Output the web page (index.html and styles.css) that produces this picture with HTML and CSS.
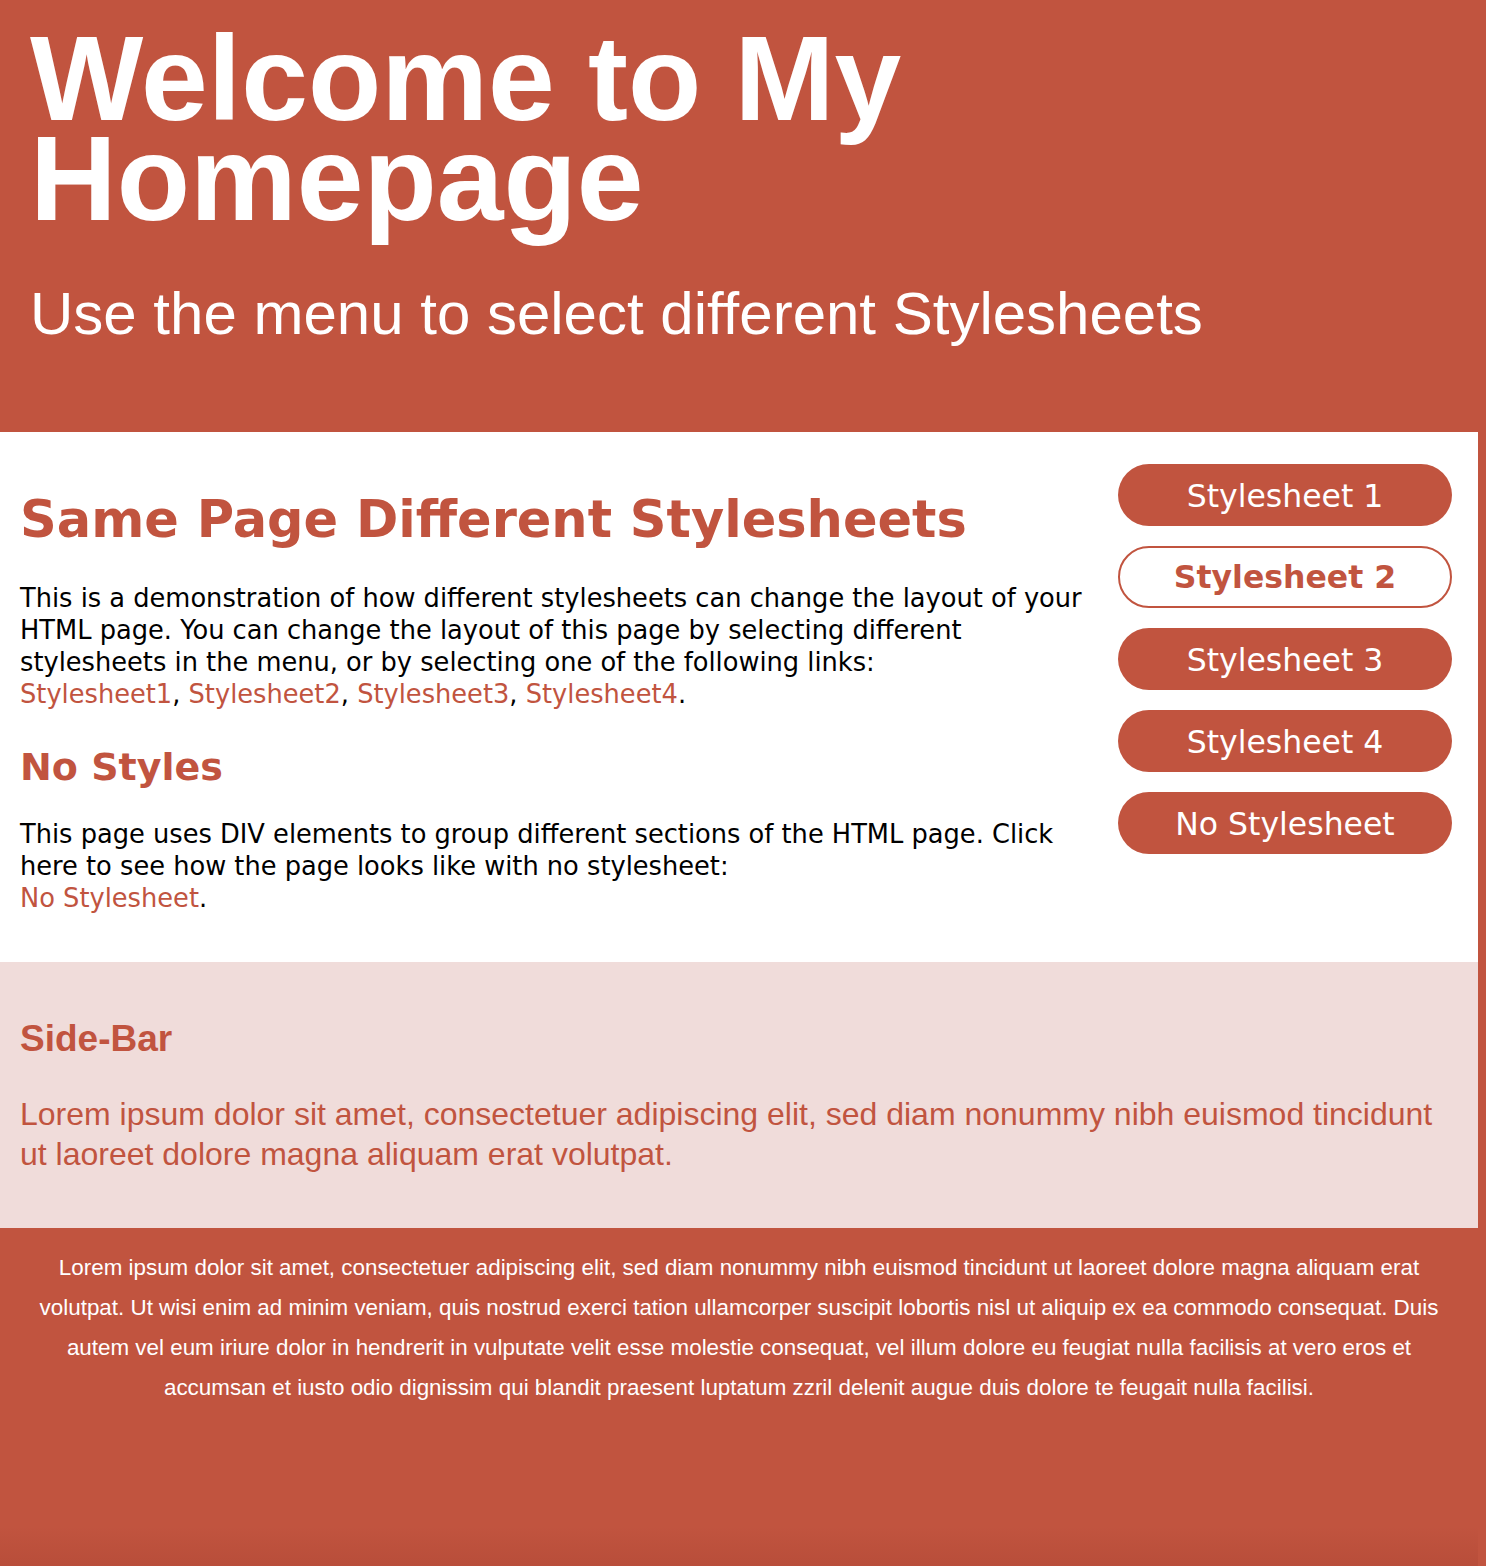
FILE: index.html
```html
<!DOCTYPE html>
<html lang="en">
<head>
<meta charset="utf-8">
<title>Welcome to My Homepage</title>
<link rel="stylesheet" href="styles.css">
</head>
<body>
<div class="header">
  <h1 class="site-title">Welcome to My Homepage</h1>
  <p class="site-subtitle">Use the menu to select different Stylesheets</p>
</div>
<div class="content">
  <div class="main">
    <h1 class="main-title">Same Page Different Stylesheets</h1>
    <p class="text">This is a demonstration of how different stylesheets can change the layout of your HTML page. You can change the layout of this page by selecting different stylesheets in the menu, or by selecting one of the following links:<br><a href="#">Stylesheet1</a>, <a href="#">Stylesheet2</a>, <a href="#">Stylesheet3</a>, <a href="#">Stylesheet4</a>.</p>
    <h2 class="sub-title">No Styles</h2>
    <p class="text">This page uses DIV elements to group different sections of the HTML page. Click here to see how the page looks like with no stylesheet:<br><a href="#">No Stylesheet</a>.</p>
  </div>
  <div class="menu">
    <a class="menu-item" href="#">Stylesheet 1</a>
    <a class="menu-item active" href="#">Stylesheet 2</a>
    <a class="menu-item" href="#">Stylesheet 3</a>
    <a class="menu-item" href="#">Stylesheet 4</a>
    <a class="menu-item" href="#">No Stylesheet</a>
  </div>
</div>
<div class="sidebar">
  <h2 class="sidebar-title">Side-Bar</h2>
  <p class="sidebar-text">Lorem ipsum dolor sit amet, consectetuer adipiscing elit, sed diam nonummy nibh euismod tincidunt ut laoreet dolore magna aliquam erat volutpat.</p>
</div>
<div class="footer">
  <p class="footer-text">Lorem ipsum dolor sit amet, consectetuer adipiscing elit, sed diam nonummy nibh euismod tincidunt ut laoreet dolore magna aliquam erat volutpat. Ut wisi enim ad minim veniam, quis nostrud exerci tation ullamcorper suscipit lobortis nisl ut aliquip ex ea commodo consequat. Duis autem vel eum iriure dolor in hendrerit in vulputate velit esse molestie consequat, vel illum dolore eu feugiat nulla facilisis at vero eros et accumsan et iusto odio dignissim qui blandit praesent luptatum zzril delenit augue duis dolore te feugait nulla facilisi.</p>
</div>
</body>
</html>
```

FILE: styles.css
```css
html, body {
  margin: 0;
  padding: 0;
}

body {
  background: #c1543f;
  min-height: 1566px;
  display: flex;
  flex-direction: column;
  font-family: "DejaVu Sans", Verdana, sans-serif;
}

.header {
  padding: 28px 30px 83px 30px;
  color: #ffffff;
  font-family: "Liberation Sans", Arial, sans-serif;
}

.site-title {
  margin: 0;
  font-size: 120px;
  line-height: 100px;
  font-weight: bold;
}

.site-subtitle {
  margin: 51px 0 0 0;
  font-size: 60px;
  line-height: 70px;
}

.content {
  background: #ffffff;
  margin-right: 8px;
  display: grid;
  grid-template-columns: 1fr 334px;
  column-gap: 20px;
  padding: 0 26px 0 20px;
}

.main {
  padding: 57px 0 48px 0;
}

.main-title {
  margin: 0 0 32px 0;
  font-size: 51px;
  line-height: 61px;
  font-weight: bold;
  color: #c1543f;
}

.sub-title {
  margin: 34px 0 28px 0;
  font-size: 38px;
  line-height: 46px;
  font-weight: bold;
  color: #c1543f;
}

.text {
  margin: 0;
  font-size: 25.7px;
  line-height: 32px;
  color: #000000;
}

.text a {
  color: #c1543f;
  text-decoration: none;
}

.menu {
  padding-top: 32px;
  display: flex;
  flex-direction: column;
  gap: 20px;
}

.menu-item {
  box-sizing: border-box;
  display: block;
  height: 62px;
  padding-top: 2px;
  line-height: 60px;
  border-radius: 31px;
  background: #c1543f;
  color: #ffffff;
  text-align: center;
  text-decoration: none;
  font-size: 31.5px;
}

.menu-item.active {
  background: #ffffff;
  border: 2px solid #c1543f;
  padding-top: 1px;
  line-height: 57px;
  color: #c1543f;
  font-weight: bold;
}

.sidebar {
  background: #f0dcda;
  margin-right: 8px;
  padding: 55px 40px 54px 20px;
  font-family: "Liberation Sans", Arial, sans-serif;
  color: #c1543f;
}

.sidebar-title {
  margin: 0 0 34px 0;
  font-size: 37px;
  line-height: 43px;
  font-weight: bold;
}

.sidebar-text {
  margin: 0;
  font-size: 32px;
  line-height: 40px;
}

.footer {
  flex: 1;
  margin-right: 8px;
  padding: 20px 20px 0 20px;
  font-family: "Liberation Sans", Arial, sans-serif;
  color: #ffffff;
  background: linear-gradient(to bottom, rgba(0, 0, 0, 0) calc(100% - 40px), rgba(120, 30, 20, 0.12) 100%);
}

.footer-text {
  margin: 0;
  font-size: 22.4px;
  line-height: 40px;
  text-align: center;
}
```
